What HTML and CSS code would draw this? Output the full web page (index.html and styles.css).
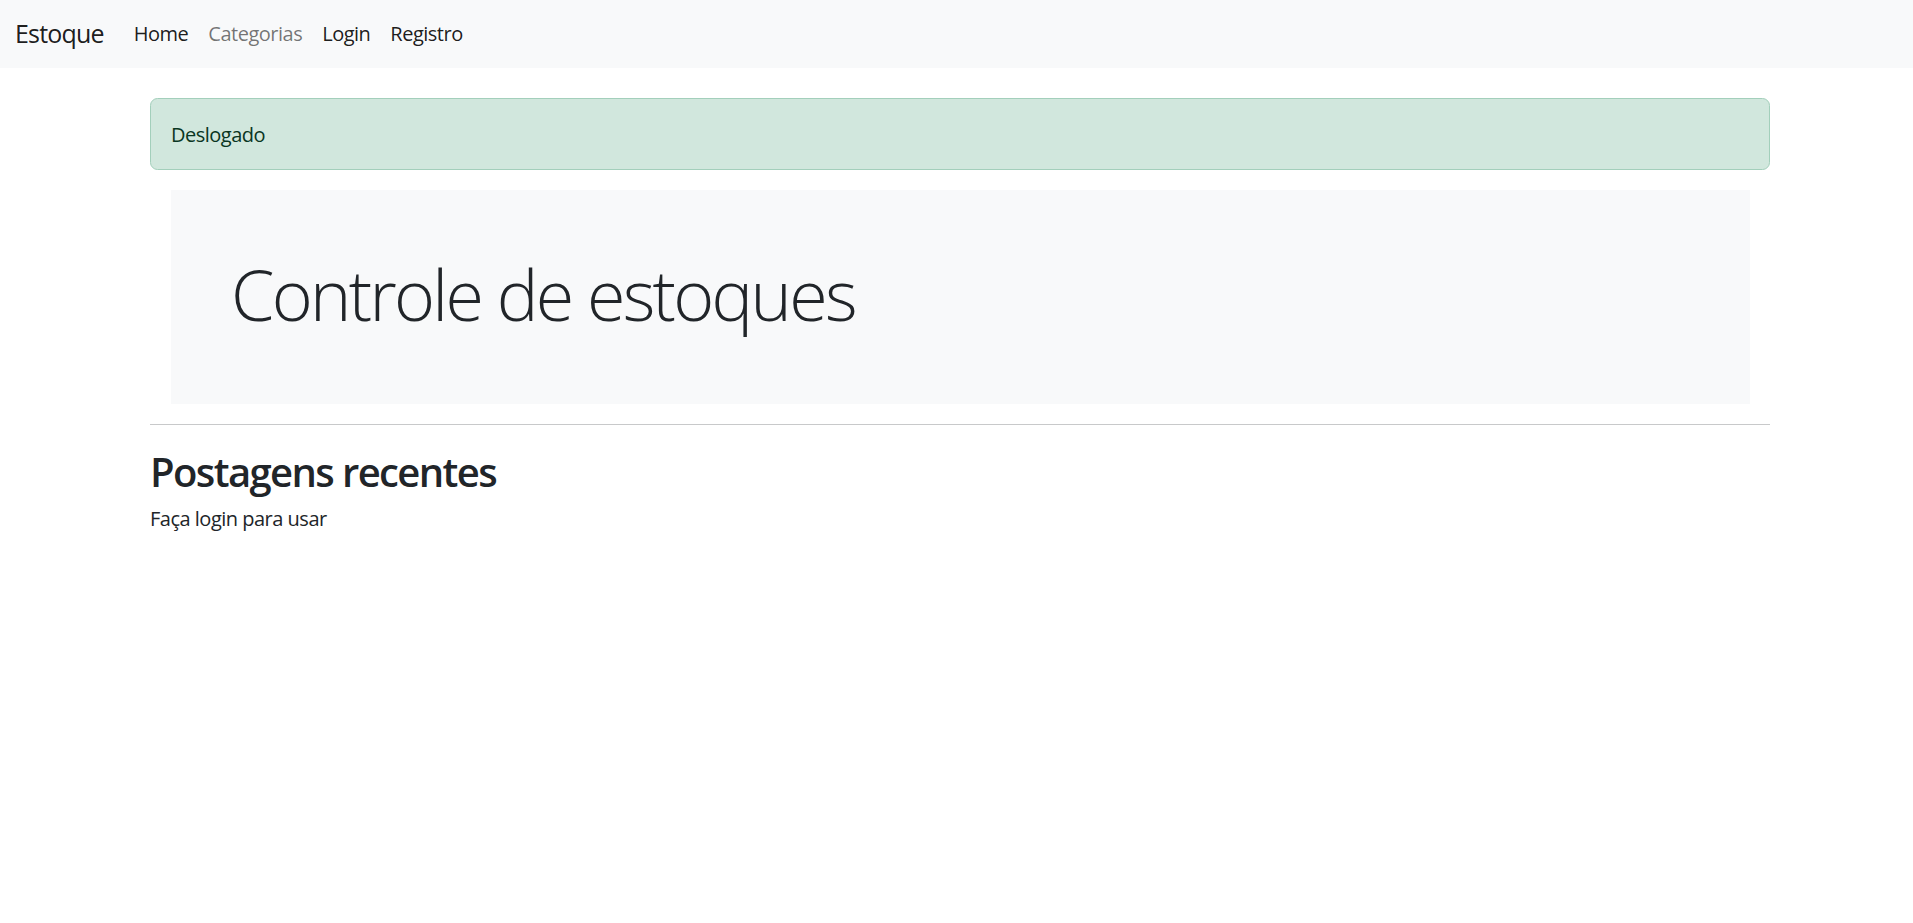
FILE: index.html
```html
<!DOCTYPE html>
<html lang="pt-BR">
<head>
<meta charset="utf-8">
<title>Estoque</title>
<link rel="stylesheet" href="styles.css">
</head>
<body>
<nav class="navbar">
  <a class="brand" href="#">Estoque</a>
  <ul class="nav">
    <li><a class="nav-link" href="#">Home</a></li>
    <li><a class="nav-link muted" href="#">Categorias</a></li>
    <li><a class="nav-link" href="#">Login</a></li>
    <li><a class="nav-link" href="#">Registro</a></li>
  </ul>
</nav>
<main class="main">
  <div class="container">
    <div class="alert">Deslogado</div>
    <div class="jumbotron">
      <h1 class="display">Controle de estoques</h1>
    </div>
    <hr class="divider">
    <h2 class="section-title">Postagens recentes</h2>
    <p class="note">Faça login para usar</p>
  </div>
</main>
</body>
</html>
```
FILE: styles.css
```css
* { box-sizing: border-box; }
html, body { margin: 0; padding: 0; background: #fff; }
body {
  font-family: "Open Sans", "Noto Sans", "DejaVu Sans", sans-serif;
  font-size: 20px;
  line-height: 1.5;
  letter-spacing: -0.5px;
  color: #212529;
}
.navbar {
  display: flex;
  align-items: center;
  height: 68px;
  padding: 0 15px;
  background: #f8f9fa;
}
.brand {
  font-size: 25px;
  letter-spacing: -0.8px;
  color: rgba(0, 0, 0, 0.9);
  text-decoration: none;
  margin-right: 20px;
  line-height: 1.5;
}
.nav {
  display: flex;
  list-style: none;
  margin: 0;
  padding: 0;
}
.nav-link {
  display: block;
  padding: 0 10px;
  color: rgba(0, 0, 0, 0.9);
  text-decoration: none;
}
.nav-link.muted { color: rgba(0, 0, 0, 0.55); }
.main { padding-left: 7px; }
.container {
  width: 1620px;
  margin: 0 auto;
}
.alert {
  margin-top: 30px;
  margin-bottom: 20px;
  padding: 21px 20px 19px;
  border: 1px solid #a3cfbb;
  border-radius: 7.5px;
  background: #d1e7dd;
  color: #0a3622;
}
.jumbotron {
  margin: 0 20px 20px 21px;
  padding: 62px 60px 58px;
  background: #f8f9fa;
}
.display {
  margin: 0 0 10px;
  font-size: 70px;
  font-weight: 300;
  line-height: 1.2;
  letter-spacing: -2.7px;
}
.divider {
  margin: 20px 0;
  border: 0;
  border-top: 1px solid #c8c9ca;
}
.section-title {
  margin: 0 0 8px;
  padding-top: 3px;
  font-size: 40px;
  font-weight: 600;
  line-height: 1.2;
  letter-spacing: -1.6px;
}
.note { margin: 0; }
```
